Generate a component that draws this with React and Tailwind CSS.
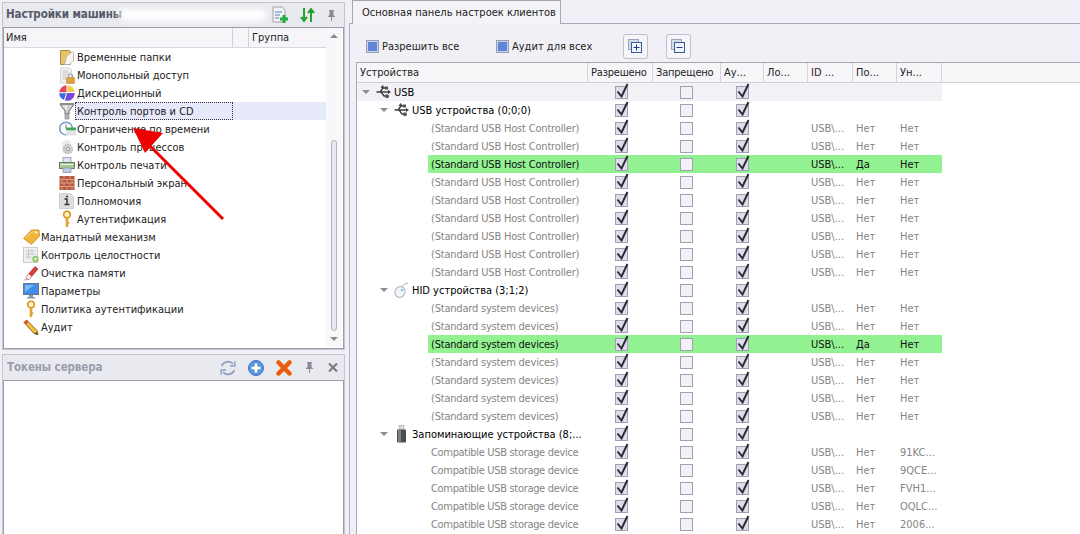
import React from "react";

// иконки дерева
const Folder = () => (
  <svg width="16" height="17" viewBox="0 0 16 17">
    <path d="M1.500 1.500h9l1 1v13h-10z" fill="#e9c36c" stroke="#a98a4c" />
    <path d="M5.500 15.500l2-8 6-5 1 1v8l-4 4z" fill="#f8f6ee" stroke="#a8a8a0" strokeWidth=".7" />
  </svg>
);
const DocLock = () => (
  <svg width="16" height="17" viewBox="0 0 16 17">
    <path d="M1.500 1h9l2 2v13h-11z" fill="#f2f2f2" stroke="#d4d4d4" />
    <path d="M3.500 4h6M3.500 6h7M3.500 8h5M3.500 10h4M3.500 12h4" stroke="#c4c4c4" />
    <rect x="7.500" y="10.500" width="8" height="6" rx=".5" fill="#e0a040" stroke="#b88030" strokeWidth=".5" />
    <path d="M9.500 10.500V9a2 2 0 0 1 4 0v1.500" fill="none" stroke="#9a9a9a" strokeWidth="1.200" />
  </svg>
);
const Pie = () => (
  <svg width="16" height="16" viewBox="0 0 16 16">
    <path d="M7.500 7.300V0.300A7.500 7.500 0 0 0 0.300 7.300z" fill="#e8474f" />
    <path d="M8.500 7V0.300A7.500 7.500 0 0 1 15.700 7z" fill="#f8cc44" />
    <path d="M7 8.300H0.300A7.500 7.500 0 0 0 5 15z" fill="#2f6de0" />
    <path d="M8 8h7.700A7.500 7.500 0 0 1 6 15.500z" fill="#7b48dc" />
  </svg>
);
const Funnel = () => (
  <svg width="16" height="18" viewBox="0 0 16 18">
    <path d="M1 2.500h14l-5 6.500v3H6V9z" fill="#d0d0d0" stroke="#6c6c6c" />
    <path d="M5 3.500l3 5V3.500z" fill="#f4f4f4" />
    <rect x="1" y="1" width="14" height="2" fill="#8c8c8c" />
    <rect x="6" y="12" width="4" height="5" fill="#b4b4b4" stroke="#808080" strokeWidth=".6" />
  </svg>
);
const ClockIcon = () => (
  <svg width="17" height="16" viewBox="0 0 17 16">
    <circle cx="7" cy="7.500" r="6.300" fill="#fff" stroke="#6e9ed0" strokeWidth="1.500" />
    <path d="M7 3.500v4h3" stroke="#666" fill="none" />
    <rect x="7" y="6.500" width="10" height="3" fill="#3ea858" />
    <rect x="7" y="9.500" width="10" height="5" fill="#e4e4e4" />
  </svg>
);
const Gears = () => (
  <svg width="16" height="16" viewBox="0 0 16 16">
    <path d="M3 3l5-2.500 4 2.500v11H3z" fill="#ececec" />
    <circle cx="9" cy="10" r="4.200" fill="none" stroke="#a6a6a6" strokeWidth="1.400" strokeDasharray="1.800 .8" />
    <circle cx="9" cy="10" r="2.600" fill="#a8a8a8" />
    <circle cx="9" cy="10" r="1.100" fill="#f0f0f0" />
  </svg>
);
const Printer = () => (
  <svg width="16" height="16" viewBox="0 0 16 16">
    <rect x="4" y="0.500" width="8" height="5" fill="#dde4ee" stroke="#8090a8" strokeWidth=".7" />
    <rect x="0.500" y="5.500" width="15" height="6" fill="#a8c898" stroke="#4e6848" strokeWidth=".8" />
    <path d="M2 7.500h12" stroke="#e4f0dc" />
    <rect x="4" y="11" width="8" height="4.500" fill="#b8cce8" stroke="#8090a8" strokeWidth=".7" />
  </svg>
);
const Wall = () => (
  <svg width="16" height="16" viewBox="0 0 16 16">
    <rect x="0.500" y="1" width="15" height="14" fill="#b8583c" />
    <path d="M0 4.500h16M0 8h16M0 11.500h16M5 1v3.500M11 1v3.500M3 4.500V8M8 4.500V8M13 4.500V8M5 8v3.500M11 8v3.500M3 11.500V15M8 11.500V15M13 11.500V15" stroke="#e0b8a0" strokeWidth=".7" />
  </svg>
);
const Info = () => (
  <svg width="15" height="16" viewBox="0 0 15 16">
    <path d="M0.500 0.500h11l3 3v12h-14z" fill="#dedede" stroke="#d0d0d0" />
    <path d="M5.500 6h2.500v5M5.500 11.500h5" fill="none" stroke="#333" strokeWidth="1.500" />
    <path d="M7 3.500h2" stroke="#333" strokeWidth="1.500" />
  </svg>
);
const KeyIcon = () => (
  <svg width="16" height="18" viewBox="0 0 16 18">
    <circle cx="8" cy="4.500" r="3.300" fill="#fff3c8" stroke="#d8941c" strokeWidth="1.600" />
    <path d="M8 8v9" stroke="#e6a22e" strokeWidth="2.600" />
    <path d="M9 13h1.500" stroke="#c88414" />
  </svg>
);
const Tag = () => (
  <svg width="17" height="16" viewBox="0 0 17 16">
    <path d="M0.500 9.500l8-8.500h7.500l0.500 6-8 8.500z" fill="#f2b63a" stroke="#c88820" strokeWidth=".8" strokeLinejoin="round" />
    <path d="M3 9l6-6h5" fill="none" stroke="#fadc88" />
    <circle cx="13.500" cy="3.500" r="1" fill="#fff" />
  </svg>
);
const Table = () => (
  <svg width="17" height="16" viewBox="0 0 17 16">
    <rect x="0.500" y="0.500" width="14" height="15" fill="#f0f0f0" stroke="#cccccc" />
    <path d="M2.500 4h10M2.500 7h10M2.500 10h6M5.500 2v10M9 2v6" stroke="#c8c8c8" />
    <circle cx="12.500" cy="12" r="3.200" fill="#8cc46c" />
    <path d="M10.800 12h3.400M12.500 10.300v3.400" stroke="#f0f8e8" />
  </svg>
);
const Eraser = () => (
  <svg width="16" height="16" viewBox="0 0 16 16">
    <path d="M0.500 15l6-1" stroke="#c4c4c4" strokeWidth="1.600" />
    <path d="M3 12L12 1.500l3 2.500-8.500 10H4z" fill="#d8403c" stroke="#a02c28" strokeWidth=".7" />
    <path d="M3 12l1.500 2H6.500L8.500 11.500 5.500 9z" fill="#f4f0f0" />
  </svg>
);
const Monitor = () => (
  <svg width="16" height="16" viewBox="0 0 16 16">
    <rect x="0.500" y="0.500" width="15" height="11" fill="#3f8fea" stroke="#68788c" />
    <path d="M2 2h9L2 9z" fill="#7cb8f4" />
    <rect x="6" y="12" width="4" height="2" fill="#8898a8" />
    <rect x="4" y="14" width="8" height="1.500" fill="#8898a8" />
  </svg>
);
const PencilIcon = () => (
  <svg width="16" height="16" viewBox="0 0 16 16">
    <path d="M1 3.500L3.500 1 14 11.500l1 4-4-1z" fill="#f6c22c" stroke="#5c4a20" strokeWidth=".8" />
    <path d="M1 3.500L3.500 1l2 2-2.500 2.500z" fill="#dc4a3e" />
    <path d="M13 13l2 2.500-3-.8z" fill="#333" />
  </svg>
);
const UsbIcon = () => (
  <svg width="15" height="14" viewBox="0 0 15 14">
    <path d="M0.500 7h13M4 7l3-4h3M5 7l3 4h2" stroke="#3c3c44" strokeWidth="1.400" fill="none" />
    <path d="M6.500 0l2.500 3H4.500z" fill="#444" />
    <path d="M12 5l3 2-3 2z" fill="#3c3c44" />
    <rect x="9" y="1.500" width="3" height="3" fill="#555" />
    <circle cx="11" cy="11.300" r="2" fill="#555" />
  </svg>
);
const Mouse = () => (
  <svg width="15" height="16" viewBox="0 0 15 16">
    <ellipse cx="6" cy="10" rx="5" ry="5.500" fill="#f2f4f8" stroke="#a8b0c0" transform="rotate(25 6 10)" />
    <path d="M8 5q2-4 6-4" fill="none" stroke="#a0b0c8" />
    <circle cx="8" cy="8" r="1.300" fill="#8cc0e0" />
  </svg>
);
const Stick = () => (
  <svg width="15" height="18" viewBox="0 0 15 18">
    <rect x="5" y="0.500" width="5" height="4" fill="#d8d8d8" stroke="#999" strokeWidth=".5" />
    <rect x="3" y="4.500" width="9" height="13" rx="1" fill="#4c4c4c" />
    <rect x="4" y="5" width="3" height="12" fill="#808080" />
  </svg>
);
const PinIcon = ({ className }) => (
  <svg width="9" height="11" viewBox="0 0 9 11" className={className}>
    <path d="M2 0h5v1H6.500v4L8.500 7h-8l2-2V1H2zM4 7h1v4H4z" fill="#8a8a94" />
  </svg>
);
const CloseIcon = () => (
  <svg width="10" height="9" viewBox="0 0 10 9">
    <path d="M1 .500l8 8M9 .500l-8 8" stroke="#7c7c86" strokeWidth="2.200" />
  </svg>
);

const tree = [
  { icon: <Folder />, name: "Временные папки", sub: true },
  { icon: <DocLock />, name: "Монопольный доступ", sub: true },
  { icon: <Pie />, name: "Дискреционный", sub: true },
  { icon: <Funnel />, name: "Контроль портов и CD", sub: true, selected: true },
  { icon: <ClockIcon />, name: "Ограничение по времени", sub: true },
  { icon: <Gears />, name: "Контроль процессов", sub: true },
  { icon: <Printer />, name: "Контроль печати", sub: true },
  { icon: <Wall />, name: "Персональный экран", sub: true },
  { icon: <Info />, name: "Полномочия", sub: true },
  { icon: <KeyIcon />, name: "Аутентификация", sub: true },
  { icon: <Tag />, name: "Мандатный механизм" },
  { icon: <Table />, name: "Контроль целостности" },
  { icon: <Eraser />, name: "Очистка памяти" },
  { icon: <Monitor />, name: "Параметры" },
  { icon: <KeyIcon />, name: "Политика аутентификации" },
  { icon: <PencilIcon />, name: "Аудит" },
];

const repeat = (name, track, items) =>
  items.map((it, i) => ({ level: 2, name, track, id: "USB\\...", po: it.on ? "Да" : "Нет", un: it.un || "Нет", on: it.on, key: name + i }));

const rows = [
  { level: 0, name: "USB", icon: <UsbIcon />, shaded: true, key: "usb" },
  { level: 1, name: "USB устройства (0;0;0)", icon: <UsbIcon />, key: "usb-dev" },
  ...repeat("(Standard USB Host Controller)", "tracking-[-0.18px]", [{}, {}, { on: true }, {}, {}, {}, {}, {}, {}]),
  { level: 1, name: "HID устройства (3;1;2)", icon: <Mouse />, key: "hid" },
  ...repeat("(Standard system devices)", "tracking-[-0.2px]", [{}, {}, { on: true }, {}, {}, {}, {}]),
  { level: 1, name: "Запоминающие устройства (8;...", icon: <Stick />, key: "storage" },
  ...repeat("Compatible USB storage device", "tracking-[-0.32px]", [{ un: "91KC..." }, { un: "9QCE..." }, { un: "FVH1..." }, { un: "OQLC..." }, { un: "2006..." }]),
];

const Check = ({ checked }) => (
  <span className={`relative block w-[13px] h-[13px] border border-[#a0a0b4] ${checked ? "bg-[#dedeea]" : "bg-[#f2f2f6]"}`}>
    {checked && (
      <svg className="absolute -left-px -top-[5px] overflow-visible" width="14" height="17" viewBox="0 0 14 17">
        <path d="M2.500 9.500l4 5L12.500 2" fill="none" stroke="#2c2c38" strokeWidth="2" />
      </svg>
    )}
  </span>
);

const Expander = () => <span className="block w-0 h-0 border-x-[4px] border-x-transparent border-t-[4px] border-t-[#8a8a92]" />;

const columns = [
  ["Устройства", "w-[231px]", ""],
  ["Разрешено", "w-[65px]", "tracking-[-0.2px]"],
  ["Запрещено", "w-[68px]", "tracking-[-0.2px]"],
  ["Ау...", "w-[43px]", ""],
  ["Ло...", "w-[44px]", ""],
  ["ID ...", "w-[45px]", ""],
  ["По...", "w-[44px]", ""],
  ["Ун...", "w-[45px]", ""],
];

const DeviceRow = ({ row }) => {
  const tint = row.on ? "bg-[#92f292]" : "";
  const dim = row.on ? "text-[#111]" : "text-[#858585]";
  return (
    <div className={`flex h-[18px] items-center w-[585px] ${row.shaded ? "bg-[#f2f1f6]" : ""}`}>
      <div className={`w-[231px] h-full flex items-center shrink-0 ${row.level === 2 ? "pl-[74px]" : row.level === 1 ? "pl-[23px]" : "pl-[5px]"}`}>
        {row.level < 2 ? (
          <>
            <span className="w-[14px] flex shrink-0"><Expander /></span>
            <span className="w-[18px] flex justify-start shrink-0">{row.icon}</span>
            <span className="text-black whitespace-nowrap">{row.name}</span>
          </>
        ) : (
          <span className={`h-full flex items-center -ml-[3px] pl-[3px] flex-1 whitespace-nowrap ${row.track} ${tint} ${dim}`}>{row.name}</span>
        )}
      </div>
      <div className={`flex-1 h-full flex items-center ${tint}`}>
        <div className="w-[65px] flex justify-center pl-[2px]"><Check checked /></div>
        <div className="w-[68px] flex justify-center pr-[2px]"><Check /></div>
        <div className="w-[43px] flex justify-center"><Check checked /></div>
        <div className="w-[44px]" />
        {row.level === 2 && (
          <>
            <div className={`w-[45px] pl-[3px] ${dim}`}>{row.id}</div>
            <div className={`w-[44px] pl-[3px] ${dim}`}>{row.po}</div>
            <div className={`w-[45px] pl-[3px] ${dim}`}>{row.un}</div>
          </>
        )}
      </div>
    </div>
  );
};

const SmallButton = ({ minus }) => (
  <button className="w-[25px] h-[25px] border border-[#c0c0cc] rounded-[3px] bg-[#f6f6fa] flex items-center justify-center">
    <svg width="15" height="15" viewBox="0 0 15 15">
      <rect x="0.500" y="0.500" width="10" height="10" fill="#d4dcec" stroke="#98a8c4" />
      <rect x="3.500" y="3.500" width="10" height="10" fill="#eef2fa" stroke="#3c5c94" />
      <path d={minus ? "M5.500 8.500h6" : "M5.500 8.500h6M8.500 5.500v6"} stroke="#1c3c84" />
    </svg>
  </button>
);

const Square = ({ label, className }) => (
  <div className={`flex items-center gap-[3px] ${className}`}>
    <span className="block w-[13px] h-[13px] border border-[#9c9cb0] bg-[#5f84d8] shadow-[inset_0_0_0_1px_#c8d4f0]" />
    <span className="text-[#222]">{label}</span>
  </div>
);

export default function App() {
  return (
    <div className="relative w-[1080px] h-[534px] overflow-hidden flex bg-[#f0f0f6] text-[11px] leading-none font-['DejaVu_Sans',sans-serif] font-stretch-condensed">
      {/* левая колонка */}
      <div className="w-[349px] shrink-0 flex flex-col pl-[2px] pr-[4px] pt-[2px] gap-[4px]">
        <div className="h-[348px] border border-[#c4c4cc] flex flex-col bg-[#e9e9f0]">
          <div className="h-[24px] flex items-center pl-[3px] pr-[8px] shrink-0">
            <span className="font-bold text-[11.500px] tracking-[-0.1px] text-[#555a68] whitespace-nowrap">Настройки машины</span>
            <div className="flex-1" />
            <svg width="18" height="18" viewBox="0 0 18 18" className="mr-[11px]">
              <path d="M2 1h9l3 3v12H2z" fill="#f4f4f4" stroke="#a0a0a0" />
              <path d="M4 6h7M4 9h5M4 12h4" stroke="#5080c0" />
              <path d="M13 9v8M9 13h8" stroke="#20b040" strokeWidth="3" />
            </svg>
            <svg width="15" height="14" viewBox="0 0 15 14" className="mr-[12px]">
              <path d="M4 14V5M1 5l3-4 3 4" fill="#2ca02c" stroke="#2ca02c" strokeWidth="2" transform="rotate(180 4 7)" />
              <path d="M11 14V4M8 5l3-4 3 4" fill="#2ca02c" stroke="#2ca02c" strokeWidth="2" />
            </svg>
            <PinIcon />
          </div>
          <div className="flex-1 min-h-0 border border-[#9c9cac] bg-white flex flex-col">
            <div className="flex">
              <div className="w-[322px]">
                <div className="h-[20px] flex items-center bg-[#f6f6f9] border-b border-b-[#d8d8e2] text-[#222]">
                  <div className="w-[229px] h-full flex items-center pl-[2px] border-r border-r-[#d0d0da]">Имя</div>
                  <div className="w-[16px] h-full border-r border-r-[#d0d0da]" />
                  <div className="pl-[3px]">Группа</div>
                </div>
                {tree.map((t) => (
                  <div key={t.name} className={`h-[18px] flex items-center ${t.sub ? "pl-[55px]" : "pl-[19px]"}`}>
                    <span className="w-[18px] h-[18px] flex items-center justify-start shrink-0">{t.icon}</span>
                    {t.selected ? (
                      <span className="flex-1 h-full bg-[#e6e9fa] -ml-[2px]">
                        <span className="h-full flex items-center whitespace-nowrap text-[#222] border border-dotted border-[#333] w-[158px] pl-[1px]">{t.name}</span>
                      </span>
                    ) : (
                      <span className="whitespace-nowrap text-[#222]">{t.name}</span>
                    )}
                  </div>
                ))}
              </div>
              <div className="w-[16px] h-[319px] flex flex-col items-center py-[6px] bg-[#f8f8fb]">
                <span className="block w-0 h-0 border-x-[4px] border-x-transparent border-b-[4px] border-b-[#8a8a92]" />
                <div className="flex-1 w-full flex flex-col items-center justify-end pb-[6px]">
                  <div className="w-[6px] h-[191px] rounded-[3px] border border-[#b4b4c0] bg-[#e8e8ee]" />
                </div>
                <span className="block w-0 h-0 border-x-[4px] border-x-transparent border-t-[4px] border-t-[#8a8a92]" />
              </div>
            </div>
          </div>
        </div>
        <div className="flex-1 border border-[#c4c4cc] border-b-0 flex flex-col bg-[#e9e9f0]">
          <div className="h-[25px] flex items-center pl-[4px] pr-[6px] shrink-0">
            <span className="font-bold text-[11.500px] tracking-[-0.1px] text-[#9a9eaa]">Токены сервера</span>
            <div className="flex-1" />
            <svg width="16" height="16" viewBox="0 0 16 16" className="mr-[12px]">
              <path d="M2 6a6 5 0 0 1 11-2M14 10a6 5 0 0 1-11 2" fill="none" stroke="#8fa0c4" strokeWidth="1.800" />
              <path d="M15 1v5h-5M1 15v-5h5" fill="none" stroke="#8fa0c4" strokeWidth="1.300" />
            </svg>
            <svg width="16" height="16" viewBox="0 0 16 16" className="mr-[12px]">
              <circle cx="8" cy="8" r="7.500" fill="#5a98e0" stroke="#3c70b8" />
              <path d="M8 3.500v9M3.500 8h9" stroke="#fff" strokeWidth="2.500" />
            </svg>
            <svg width="16" height="16" viewBox="0 0 16 16" className="mr-[13px]">
              <path d="M2.500 2.500l11 11M13.500 2.500l-11 11" stroke="#ec5c10" strokeWidth="4.500" strokeLinecap="round" />
            </svg>
            <PinIcon className="mr-[14px]" />
            <CloseIcon />
          </div>
          <div className="flex-1 border border-[#9c9cac] border-b-0 bg-white" />
        </div>
      </div>

      {/* правая часть */}
      <div className="flex-1 min-w-0 flex flex-col">
        <div className="h-[24px] flex border-b border-b-[#a8a8b4] shrink-0">
          <div className="h-[24px] w-[209px] ml-[3px] border border-[#a8a8b4] border-b-0 bg-[#f4f4f8] flex items-center pl-[9px] text-[#222]">Основная панель настроек клиентов</div>
        </div>
        <div className="flex-1 min-h-0 flex flex-col border-l border-l-[#b0b0c4]">
          <div className="h-[38px] flex items-center shrink-0 pl-[16px] pt-[7px]">
            <Square label="Разрешить все" className="w-[130px]" />
            <Square label="Аудит для всех" className="w-[127px]" />
            <SmallButton />
            <div className="w-[18px]" />
            <SmallButton minus />
          </div>
          <div className="flex-1 min-h-0 bg-white ml-[6px] border-l border-t border-[#a8a8b4] overflow-hidden">
            <div className="h-[20px] flex items-center bg-[#f6f6f9] border-b border-b-[#d0d0dc] text-[#222]">
              {columns.map(([label, w, track]) => (
                <div key={label} className={`${w} ${track} h-full flex items-center pl-[3px] border-r border-r-[#d4d4de] whitespace-nowrap`}>{label}</div>
              ))}
            </div>
            {rows.map((row) => <DeviceRow key={row.key} row={row} />)}
          </div>
        </div>
      </div>

      {/* пятно поверх заголовка и стрелка */}
      <div className="absolute left-[119px] top-[9px] w-[148px] h-[12px] bg-white rounded-full blur-[3px]" />
      <svg className="absolute left-[120px] top-[118px] pointer-events-none" width="110" height="106" viewBox="0 0 110 106">
        <path d="M103 101L26 24" stroke="#ee0000" strokeWidth="3" />
        <path d="M13 10l30 5-18 20z" fill="#ee0000" />
      </svg>
    </div>
  );
}
